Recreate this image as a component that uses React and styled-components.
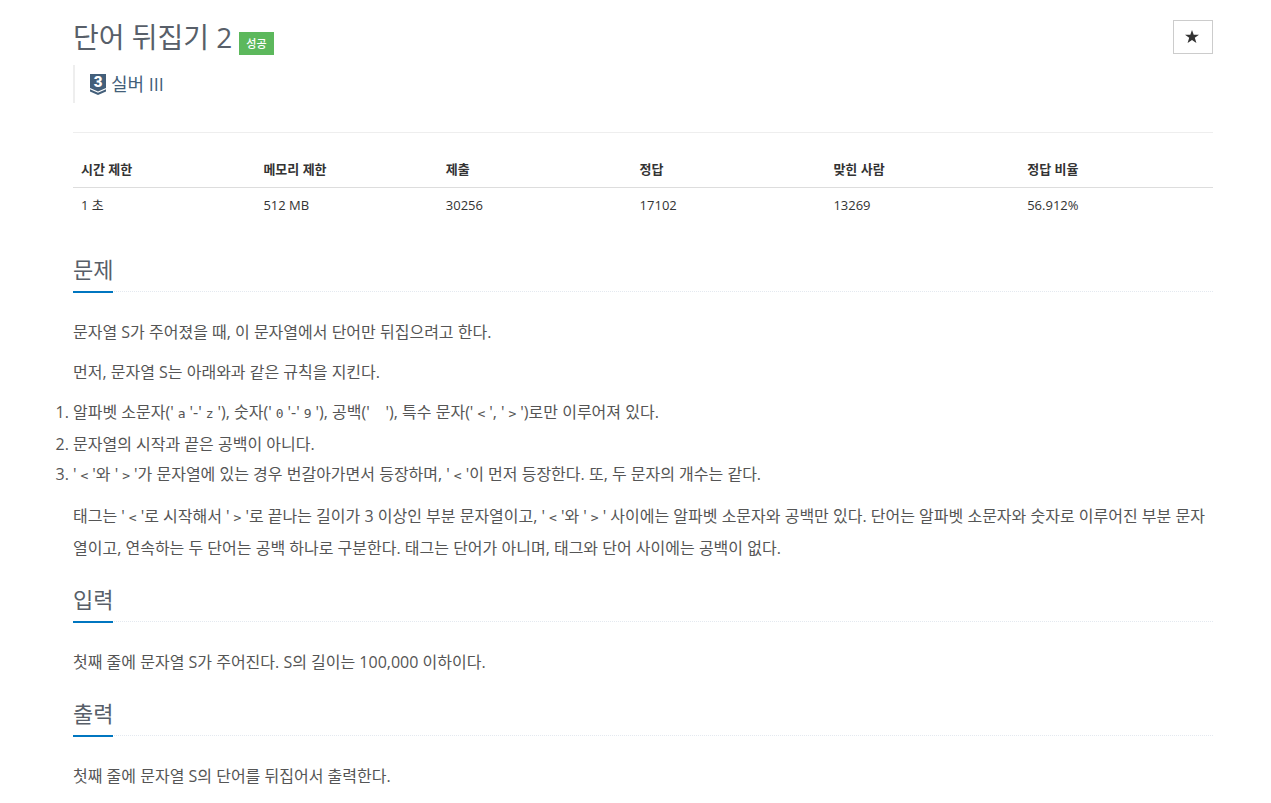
import styled, { createGlobalStyle } from "styled-components";

const infos = [
  { name: "시간 제한", value: "1 초", width: 16 },
  { name: "메모리 제한", value: "512 MB", width: 16 },
  { name: "제출", value: "30256", width: 17 },
  { name: "정답", value: "17102", width: 17 },
  { name: "맞힌 사람", value: "13269", width: 17 },
  { name: "정답 비율", value: "56.912%", width: 17 },
];

export default function App() {
  return (
    <>
      <GlobalStyle />
      <Main>
        <Header>
          <div>
            <TitleRow>
              <Title>단어 뒤집기 2</Title>
              <Label>성공</Label>
            </TitleRow>
            <Tier>
              <TierIcon />
              실버 III
            </Tier>
          </div>
          <StarButton aria-label="즐겨찾기">
            <StarIcon />
          </StarButton>
        </Header>
        <InfoTable />
        <Section title="문제">
          <Text>문자열 S가 주어졌을 때, 이 문자열에서 단어만 뒤집으려고 한다.</Text>
          <Text>먼저, 문자열 S는 아래와과 같은 규칙을 지킨다.</Text>
          <Rules>
            <li>
              알파벳 소문자('<Code>a</Code>'-'<Code>z</Code>'), 숫자('<Code>0</Code>'-'<Code>9</Code>'), 공백('<Code>&nbsp;</Code>'), 특수 문자('<Code>&lt;</Code>', '<Code>&gt;</Code>')로만 이루어져 있다.
            </li>
            <li>문자열의 시작과 끝은 공백이 아니다.</li>
            <li>
              '<Code>&lt;</Code>'와 '<Code>&gt;</Code>'가 문자열에 있는 경우 번갈아가면서 등장하며, '<Code>&lt;</Code>'이 먼저 등장한다. 또, 두 문자의 개수는 같다.
            </li>
          </Rules>
          <Text>
            태그는 '<Code>&lt;</Code>'로 시작해서 '<Code>&gt;</Code>'로 끝나는 길이가 3 이상인 부분 문자열이고, '<Code>&lt;</Code>'와 '<Code>&gt;</Code>' 사이에는 알파벳 소문자와 공백만 있다. 단어는 알파벳 소문자와 숫자로 이루어진 부분 문자열이고, 연속하는 두 단어는 공백 하나로 구분한다. 태그는 단어가 아니며, 태그와 단어 사이에는 공백이 없다.
          </Text>
        </Section>
        <Section title="입력">
          <Text>첫째 줄에 문자열 S가 주어진다. S의 길이는 100,000 이하이다.</Text>
        </Section>
        <Section title="출력">
          <Text>첫째 줄에 문자열 S의 단어를 뒤집어서 출력한다.</Text>
        </Section>
      </Main>
    </>
  );
}

function InfoTable() {
  return (
    <Table>
      <thead>
        <tr>
          {infos.map((info) => (
            <Th key={info.name} $width={info.width}>{info.name}</Th>
          ))}
        </tr>
      </thead>
      <tbody>
        <tr>
          {infos.map((info) => (
            <Td key={info.name}>{info.value}</Td>
          ))}
        </tr>
      </tbody>
    </Table>
  );
}

function Section({ title, children }) {
  return (
    <section>
      <Headline>
        <h2>{title}</h2>
      </Headline>
      {children}
    </section>
  );
}

function TierIcon() {
  return (
    <TierMark viewBox="0 0 16 21" aria-hidden="true">
      <path d="M0 0h16v14l-8 3.500-8-3.500z" fill="#435f7a" />
      <path d="M0 15.200l8 3.500 8-3.500v2.200L8 21l-8-3.600z" fill="#435f7a" />
      <text x="8" y="13" textAnchor="middle">3</text>
    </TierMark>
  );
}

function StarIcon() {
  return (
    <svg width="14" height="13" viewBox="0 0 14 13" aria-hidden="true">
      <path d="M7 0l1.700 4.700H14L9.800 7.800l1.600 5.200L7 9.900 2.600 13l1.600-5.200L0 4.700h5.300z" fill="#333" />
    </svg>
  );
}

const GlobalStyle = createGlobalStyle`
  * {
    box-sizing: border-box;
  }

  body {
    margin: 0;
    background-color: #fff;
    color: #333;
    font-family: "Open Sans", "Noto Sans CJK KR", sans-serif;
    font-size: 13px;
  }
`;

const Main = styled.main`
  padding: 20px 58px 12px 73px;
`;

const Header = styled.header`
  display: flex;
  align-items: flex-start;
  justify-content: space-between;
  padding-bottom: 29px;
  border-bottom: 1px solid #eee;
`;

const TitleRow = styled.div`
  display: flex;
  align-items: flex-end;
  gap: 7px;
  height: 35px;
`;

const Title = styled.h1`
  margin: 0;
  color: #585f69;
  font-size: 28px;
  font-weight: 400;
  line-height: 36px;
`;

const Label = styled.span`
  padding: 0 7px;
  background-color: #5cb85c;
  color: #fff;
  font-size: 11px;
  font-weight: 500;
  line-height: 23px;
`;

const Tier = styled.div`
  display: flex;
  align-items: center;
  gap: 5px;
  height: 38px;
  margin-top: 10px;
  padding-left: 15px;
  border-left: 2px solid #eee;
  color: #435f7a;
  font-size: 18px;
  line-height: 24px;
`;

const TierMark = styled.svg`
  width: 16px;
  height: 21px;

  text {
    fill: #fff;
    font-family: Roboto, sans-serif;
    font-size: 15px;
    font-weight: 900;
  }
`;

const StarButton = styled.button`
  display: flex;
  align-items: center;
  justify-content: center;
  width: 40px;
  height: 34px;
  padding: 0 2px 2px 0;
  border: 1px solid #ccc;
  background-color: #fff;
  cursor: pointer;
`;

const Table = styled.table`
  width: 100%;
  margin: 20px 0 31px;
  border-collapse: collapse;
  table-layout: fixed;
  text-align: left;
  line-height: 18px;
`;

const Th = styled.th`
  width: ${({ $width }) => $width}%;
  padding: 7px 8px 9px;
  border-bottom: 1px solid #ddd;
  font-weight: 600;
`;

const Td = styled.td`
  padding: 8px;
`;

const Headline = styled.div`
  margin-bottom: 25px;
  border-bottom: 1px dotted #e4e9f0;

  h2 {
    display: inline-block;
    margin: 0 0 -2px;
    padding-bottom: 6px;
    border-bottom: 2px solid #0076c0;
    color: #585f69;
    font-size: 22px;
    font-weight: 400;
    line-height: 32px;
    vertical-align: top;
  }
`;

const Text = styled.p`
  margin: 0 0 10px;
  color: #555;
  font-size: 16px;
  line-height: 30px;

  section > &:last-child {
    margin-bottom: 20px;
  }
`;

const Rules = styled.ol`
  margin: 0 0 10px;
  padding: 0;
  color: #555;
  font-size: 16px;
  line-height: 30px;
`;

const Code = styled.code`
  padding: 2px 4px;
  font-family: "DejaVu Sans Mono", monospace;
  font-size: 13px;
`;
